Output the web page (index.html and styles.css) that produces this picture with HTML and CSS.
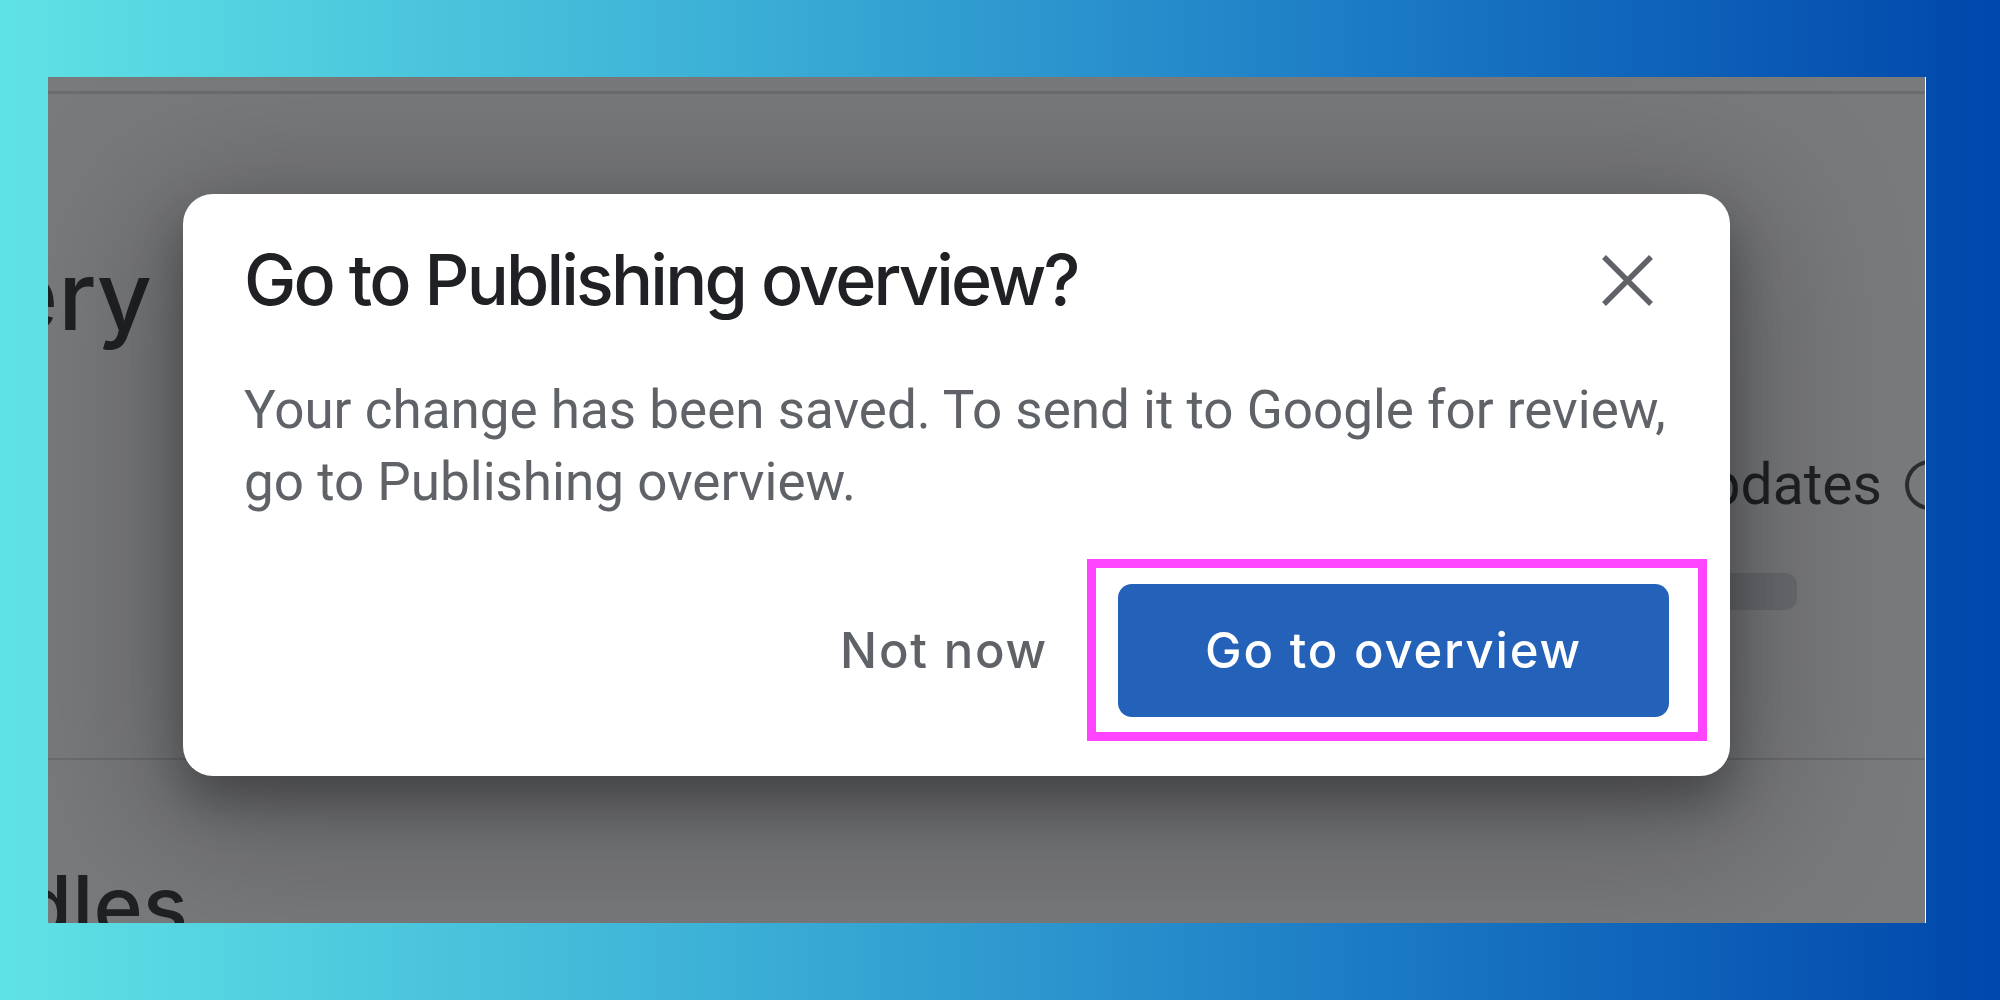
FILE: index.html
```html
<!DOCTYPE html>
<html lang="en">
<head>
<meta charset="utf-8">
<title>Go to Publishing overview?</title>
<link rel="stylesheet" href="styles.css">
</head>
<body>
<div class="frame">
  <div class="page">
    <div class="topline"></div>
    <div class="clip-left heading-box-1"><h2 class="page-heading">Delivery</h2></div>
    <div class="updates-row">
      <span class="updates-label">Managed updates</span>
      <span class="help-circle"></span>
    </div>
    <div class="bar-row"><div class="bar"></div></div>
    <div class="divider"></div>
    <div class="clip-left heading-box-2"><h2 class="page-heading small">App bundles</h2></div>
  </div>
  <div class="scrim"></div>
  <div class="dialog" role="dialog">
    <div class="dialog-head">
      <h1 class="dialog-title">Go to Publishing overview?</h1>
      <button class="close-btn" aria-label="Close">
        <svg width="51" height="51" viewBox="0 0 51 51"><path d="M2 2 L49 49 M49 2 L2 49" stroke="#5f6368" stroke-width="5.5" fill="none"/></svg>
      </button>
    </div>
    <p class="dialog-body">Your change has been saved. To send it to Google for review,<br>go to Publishing overview.</p>
    <div class="dialog-actions">
      <button class="btn-text">Not now</button>
      <div class="highlight">
        <button class="btn-primary">Go to overview</button>
      </div>
    </div>
  </div>
</div>
</body>
</html>
```
FILE: styles.css
```css
* { box-sizing: border-box; }
html, body { margin: 0; height: 100%; }
body {
  width: 2000px;
  height: 1000px;
  padding: 77px 75px 77px 48px;
  background: linear-gradient(90deg, #5fe2e5 0%, #3db2d7 35%, #1a78c4 70%, #0047ab 100%);
  overflow: hidden;
}
.frame {
  position: relative;
  width: 1877px;
  height: 846px;
  overflow: hidden;
  box-shadow: 1px 0 0 #ffffff;
}
.page {
  background: #ffffff;
  height: 100%;
  display: flex;
  flex-direction: column;
  font-family: "Inter", "Roboto", sans-serif;
  color: #202124;
}
.page > * { flex-shrink: 0; }
.topline {
  margin-top: 14px;
  height: 3px;
  background: #dadce0;
}
.clip-left {
  display: flex;
  justify-content: flex-end;
  overflow-x: clip;
  overflow-y: visible;
}
.heading-box-1 { width: 104px; margin-top: 154px; }
.heading-box-2 { width: 140px; margin-top: 104px; }
.page-heading {
  margin: 0;
  font-size: 96px;
  line-height: 94px;
  font-weight: 500;
  white-space: nowrap;
}
.page-heading.small {
  font-size: 84px;
  line-height: 84px;
}
.updates-row {
  display: flex;
  justify-content: flex-end;
  align-items: center;
  gap: 23px;
  margin-top: 114px;
  margin-right: -30px;
  height: 57px;
}
.updates-label {
  font-family: "Roboto", sans-serif;
  font-size: 57px;
  line-height: 57px;
  white-space: nowrap;
}
.help-circle {
  width: 50px;
  height: 50px;
  border: 4px solid #3c4043;
  border-radius: 50%;
}
.bar-row {
  display: flex;
  justify-content: flex-end;
  margin-top: 60px;
  padding-right: 128px;
}
.bar {
  width: 400px;
  height: 37px;
  border-radius: 12px;
  background: #dadce0;
}
.divider {
  margin-top: 148px;
  height: 2px;
  background: #dadce0;
}
.scrim {
  position: absolute;
  inset: 0;
  background: rgba(32, 33, 36, 0.6);
}
.dialog {
  position: absolute;
  left: 135px;
  top: 117px;
  width: 1547px;
  height: 582px;
  background: #ffffff;
  border-radius: 30px;
  padding: 44px 61px 59px 61px;
  box-shadow: 0 24px 50px 0 rgba(0, 0, 0, 0.32), 0 30px 150px 40px rgba(0, 0, 0, 0.22);
  display: flex;
  flex-direction: column;
}
.dialog-head {
  display: flex;
  align-items: center;
  justify-content: space-between;
  height: 84px;
}
.dialog-title {
  margin: 0;
  font-family: "Inter", "Roboto", sans-serif;
  font-weight: 500;
  font-size: 70px;
  line-height: 84px;
  color: #202124;
  letter-spacing: -2.8px;
  white-space: nowrap;
}
.close-btn {
  border: 0;
  background: none;
  padding: 0;
  margin-right: 16px;
  width: 51px;
  height: 51px;
  display: flex;
}
.dialog-body {
  margin: 52px 0 0 0;
  font-family: "Roboto", sans-serif;
  font-size: 53px;
  line-height: 72px;
  color: #5f6368;
  white-space: nowrap;
}
.dialog-actions {
  margin-top: 66px;
  display: flex;
  justify-content: flex-end;
  align-items: center;
  gap: 40px;
}
.btn-text {
  border: 0;
  background: none;
  font-family: "Inter", "Roboto", sans-serif;
  font-weight: 500;
  font-size: 49px;
  letter-spacing: 1.8px;
  color: #5f6368;
  padding: 0 30px;
  height: 133px;
}
.highlight {
  position: relative;
}
.highlight::after {
  content: "";
  position: absolute;
  top: -25px;
  bottom: -24px;
  left: -31px;
  right: -38px;
  border: 9px solid #ff44ff;
  pointer-events: none;
}
.btn-primary {
  display: block;
  border: 0;
  width: 551px;
  height: 133px;
  border-radius: 14px;
  background: #2461b9;
  color: #ffffff;
  font-family: "Inter", "Roboto", sans-serif;
  font-weight: 500;
  font-size: 49px;
  letter-spacing: 1.8px;
}
```
